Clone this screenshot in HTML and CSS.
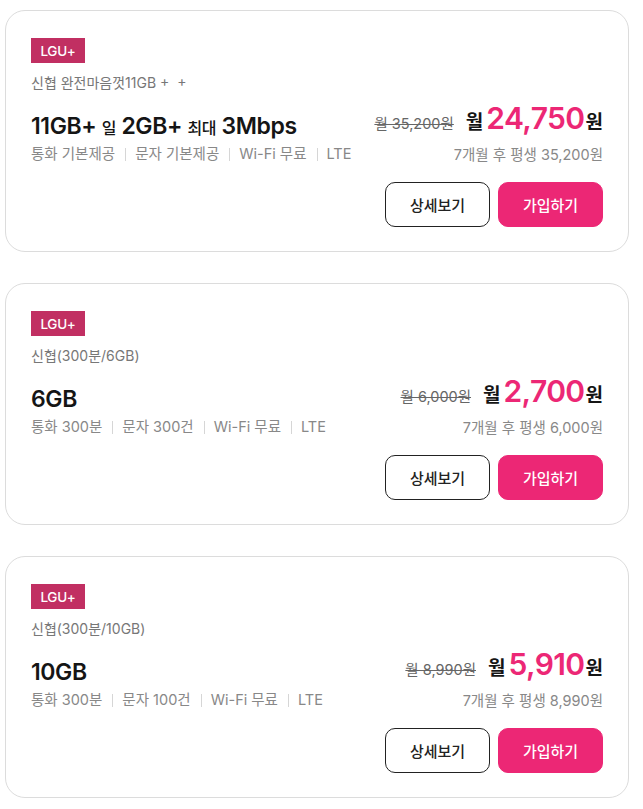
FILE: index.html
```html
<!DOCTYPE html>
<html lang="ko">
<head>
<meta charset="utf-8">
<title>요금제</title>
<link rel="stylesheet" href="styles.css">
</head>
<body>
<div class="list">
  <div class="card">
    <span class="badge">LGU+</span>
    <div class="sub">신협 완전마음껏11GB + &nbsp;+</div>
    <div class="main">
      <div class="left">
        <div class="title">11GB+ <small>일</small> 2GB+ <small>최대</small> 3Mbps</div>
        <div class="feats"><span>통화 기본제공</span><i></i><span>문자 기본제공</span><i></i><span>Wi-Fi 무료</span><i></i><span>LTE</span></div>
      </div>
      <div class="right">
        <div class="price"><s class="orig">월 35,200원</s><b class="mon">월</b><span class="num">24,750</span><b class="won">원</b></div>
        <div class="after">7개월 후 평생 35,200원</div>
      </div>
    </div>
    <div class="actions"><button class="btn outline">상세보기</button><button class="btn fill">가입하기</button></div>
  </div>

  <div class="card">
    <span class="badge">LGU+</span>
    <div class="sub">신협(300분/6GB)</div>
    <div class="main">
      <div class="left">
        <div class="title">6GB</div>
        <div class="feats"><span>통화 300분</span><i></i><span>문자 300건</span><i></i><span>Wi-Fi 무료</span><i></i><span>LTE</span></div>
      </div>
      <div class="right">
        <div class="price"><s class="orig">월 6,000원</s><b class="mon">월</b><span class="num">2,700</span><b class="won">원</b></div>
        <div class="after">7개월 후 평생 6,000원</div>
      </div>
    </div>
    <div class="actions"><button class="btn outline">상세보기</button><button class="btn fill">가입하기</button></div>
  </div>

  <div class="card">
    <span class="badge">LGU+</span>
    <div class="sub">신협(300분/10GB)</div>
    <div class="main">
      <div class="left">
        <div class="title">10GB</div>
        <div class="feats"><span>통화 300분</span><i></i><span>문자 100건</span><i></i><span>Wi-Fi 무료</span><i></i><span>LTE</span></div>
      </div>
      <div class="right">
        <div class="price"><s class="orig">월 8,990원</s><b class="mon">월</b><span class="num">5,910</span><b class="won">원</b></div>
        <div class="after">7개월 후 평생 8,990원</div>
      </div>
    </div>
    <div class="actions"><button class="btn outline">상세보기</button><button class="btn fill">가입하기</button></div>
  </div>
</div>
</body>
</html>
```

FILE: styles.css
```css
* { box-sizing: border-box; }
html, body { margin: 0; padding: 0; background: #fff; }
body {
  font-family: "Inter", "Noto Sans CJK KR", sans-serif;
  color: #1a1a1a;
}
.list {
  width: 624px;
  margin: 10px 0 0 5px;
  display: flex;
  flex-direction: column;
  gap: 31px;
}
.card {
  border: 1px solid #dcdcdc;
  border-radius: 20px;
  padding: 27px 25px 24px 25px;
  display: flex;
  flex-direction: column;
}
.badge {
  align-self: flex-start;
  background: #c12f62;
  color: #fff;
  font-size: 13.5px;
  font-weight: 500;
  height: 25px;
  width: 54px;
  display: flex;
  align-items: center;
  justify-content: center;
  letter-spacing: -0.3px;
}
.sub {
  margin-top: 10px;
  font-size: 14px;
  line-height: 20px;
  color: #777;
}
.main {
  display: flex;
  justify-content: space-between;
  align-items: flex-start;
}
.left { display: flex; flex-direction: column; }
.title {
  margin-top: 18px;
  height: 30px;
  font-size: 23px;
  line-height: 30px;
  font-weight: 600;
  color: #151515;
  letter-spacing: -0.4px;
}
.title small {
  font-size: 16px;
  font-weight: 500;
}
.feats {
  margin-top: 3px;
  height: 20px;
  font-size: 14.5px;
  line-height: 20px;
  color: #888;
  display: flex;
  align-items: center;
}
.feats i {
  display: inline-block;
  width: 1px;
  height: 13px;
  background: #d6d6d6;
  margin: 0 9px 0 10px;
}
.right {
  display: flex;
  flex-direction: column;
  align-items: flex-end;
}
.price {
  margin-top: 7px;
  height: 36px;
  display: flex;
  align-items: baseline;
  line-height: 36px;
}
.orig {
  font-size: 14.5px;
  color: #666;
  margin-right: 12px;
}
.mon, .won {
  font-size: 19px;
  font-weight: 700;
  color: #151515;
}
.num {
  font-size: 30px;
  font-weight: 600;
  color: #ec2775;
  margin: 0 1px 0 3px;
  letter-spacing: -0.6px;
}
.after {
  margin-top: 9px;
  height: 20px;
  font-size: 14.5px;
  line-height: 20px;
  color: #888;
}
.actions {
  margin-top: 17px;
  display: flex;
  justify-content: flex-end;
  gap: 8px;
}
.btn {
  width: 105px;
  height: 45px;
  border-radius: 10px;
  font-family: "Noto Sans CJK KR", sans-serif;
  font-size: 15px;
  font-weight: 500;
  cursor: pointer;
}
.outline {
  background: #fff;
  border: 1px solid #222;
  color: #222;
}
.fill {
  background: #ec2775;
  border: 1px solid #ec2775;
  color: #fff;
}
```
